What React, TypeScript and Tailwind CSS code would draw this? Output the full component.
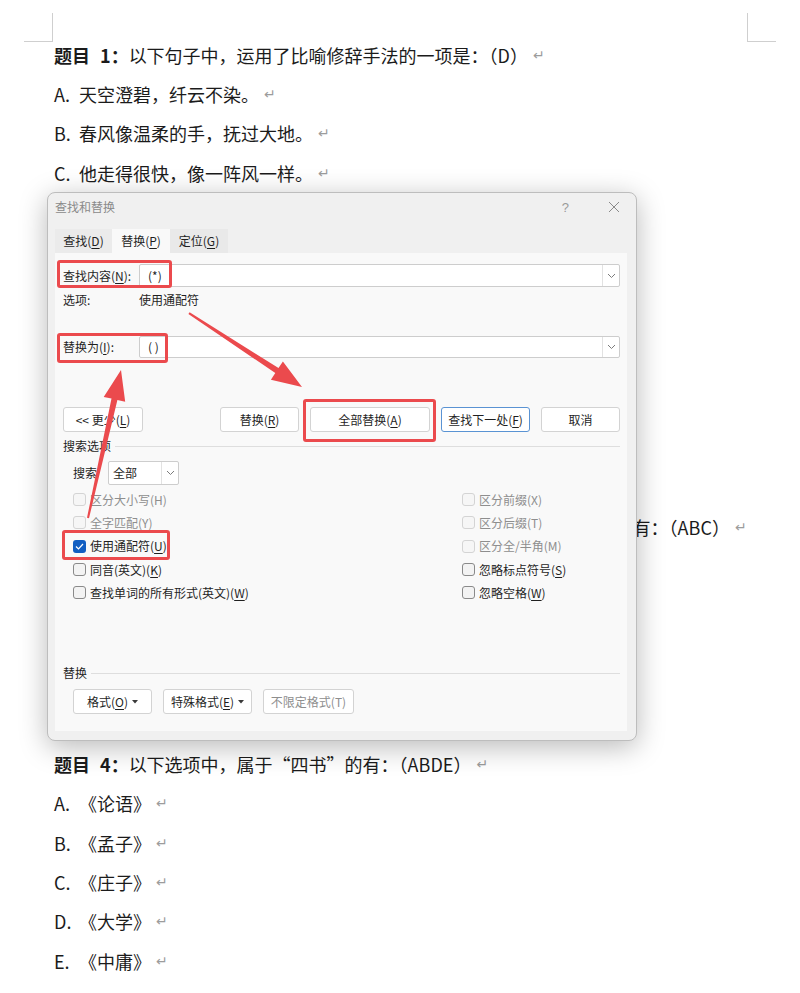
import type { ReactNode } from 'react';

const docFont = "font-['Noto_Sans_CJK_SC','Noto_Sans',sans-serif]";

function Mark() {
  return <span className="ml-[5px] text-[14px] text-[#9c9c9c] font-['DejaVu_Sans',sans-serif]">↵</span>;
}

function Line({ children }: { children?: ReactNode }) {
  return (
    <div className="h-[39.4px] flex items-center whitespace-nowrap text-[18px] leading-none text-[#1b1b1b]">
      {children}
      <Mark />
    </div>
  );
}

function Question({ n, text }: { n: number; text: string }) {
  return (
    <Line>
      <span className="font-bold">题目</span>
      <span className="font-bold ml-[10px]">{n}：</span>
      <span>{text}</span>
    </Line>
  );
}

function Option({ k, text }: { k: string; text: string }) {
  return (
    <Line>
      <span className="w-[25px]">{k}.</span>
      <span>{text}</span>
    </Line>
  );
}

function U({ children }: { children: ReactNode }) {
  return <span className="underline underline-offset-[2px] decoration-[1px]">{children}</span>;
}

function Chevron() {
  return (
    <svg width="9" height="6" viewBox="0 0 9 6" fill="none" stroke="#7c7c7c" strokeWidth="1">
      <polyline points="1 1 4.5 4.5 8 1" />
    </svg>
  );
}

function Caret() {
  return (
    <svg className="ml-[4px]" width="6" height="4" viewBox="0 0 6 4" fill="#3a3a3a">
      <polygon points="0,0 6,0 3,3.5" />
    </svg>
  );
}

function Combo({ value }: { value: string }) {
  return (
    <div className="flex-1 h-full flex items-center bg-white border border-[#cdcdcd] rounded-[2px]">
      <span className="flex-1 pl-[8px]">{value}</span>
      <div className="w-[17px] h-full border-l border-[#e2e2e2] flex items-center justify-center">
        <Chevron />
      </div>
    </div>
  );
}

function Btn({ children, w, blue, disabled }: { children: ReactNode; w: string; blue?: boolean; disabled?: boolean }) {
  return (
    <div
      className={`${w} h-[25px] flex items-center justify-center bg-white rounded-[3px] ${
        blue ? 'border-[1.5px] border-[#5a93d3]' : 'border border-[#d3d3d3]'
      } ${disabled ? 'text-[#8e8e8e]' : ''}`}
    >
      {children}
    </div>
  );
}

function Check({ label, checked, disabled }: { label: ReactNode; checked?: boolean; disabled?: boolean }) {
  return (
    <div className={`h-[23.3px] flex items-center gap-[4px] ${disabled ? 'text-[#8e8e8e]' : ''}`}>
      {checked ? (
        <div className="w-[13px] h-[13px] rounded-[3px] bg-[#115ec2] flex items-center justify-center">
          <svg width="9" height="7" viewBox="0 0 9 7" fill="none" stroke="white" strokeWidth="1.2">
            <polyline points="1 3.5 3.5 6 8 1" />
          </svg>
        </div>
      ) : (
        <div
          className={`w-[13px] h-[13px] rounded-[3px] border ${
            disabled ? 'border-[#d4d4d4] bg-[#f6f6f6]' : 'border-[#8a8a8a] bg-[#f3f3f3]'
          }`}
        />
      )}
      <span>{label}</span>
    </div>
  );
}

function Dialog() {
  return (
    <div className="absolute left-[47px] top-[192px] w-[590px] h-[549px] rounded-[8px] border border-[#bdbdbd] bg-[#f0f0f0] shadow-[0_6px_28px_rgba(0,0,0,0.28)] flex flex-col text-[12px] leading-none text-[#1f1f1f]">
      <div className="h-[28px] flex items-center pl-[7px] pr-[16px] text-[#8a8a8a]">
        <span>查找和替换</span>
        <span className="ml-auto mr-[39px] text-[13px] text-[#9a9a9a] font-['Liberation_Sans',sans-serif]">?</span>
        <svg width="12" height="12" viewBox="0 0 12 12" stroke="#8a8a8a" strokeWidth="1">
          <line x1="1" y1="1" x2="11" y2="11" />
          <line x1="11" y1="1" x2="1" y2="11" />
        </svg>
      </div>

      <div className="mt-[8px] h-[24px] ml-[7px] flex">
        <div className="w-[57px] flex items-center justify-center bg-[#ebebeb]">
          查找(<U>D</U>)
        </div>
        <div className="w-[58px] flex items-center justify-center bg-[#f9f9f9]">
          替换(<U>P</U>)
        </div>
        <div className="w-[58px] flex items-center justify-center bg-[#e9e9e9]">
          定位(<U>G</U>)
        </div>
      </div>

      <div className="flex-1 ml-[7px] mr-[9px] mb-[9px] bg-[#f9f9f9] pl-[8px] pr-[7px] pt-[11px] flex flex-col">
        <div className="h-[23px] flex items-center">
          <span className="w-[76px]">
            查找内容(<U>N</U>):
          </span>
          <Combo value="(*)" />
        </div>
        <div className="mt-[5px] h-[16px] flex items-center">
          <span className="w-[76px]">选项:</span>
          <span>使用通配符</span>
        </div>
        <div className="mt-[28px] h-[22px] flex items-center">
          <span className="w-[76px]">
            替换为(<U>I</U>):
          </span>
          <Combo value="( )" />
        </div>

        <div className="mt-[49px] flex items-center">
          <Btn w="w-[80px]">
            &lt;&lt; 更少(<U>L</U>)
          </Btn>
          <div className="ml-auto flex gap-[11px]">
            <Btn w="w-[79px]">
              替换(<U>R</U>)
            </Btn>
            <Btn w="w-[120px]">
              全部替换(<U>A</U>)
            </Btn>
            <Btn w="w-[89px]" blue>
              查找下一处(<U>F</U>)
            </Btn>
            <Btn w="w-[79px]">取消</Btn>
          </div>
        </div>

        <div className="mt-[7px] h-[14px] flex items-center">
          <span>搜索选项</span>
          <div className="flex-1 ml-[4px] h-px bg-[#dedede]" />
        </div>

        <div className="mt-[8px] h-[24px] pl-[10px] flex items-center">
          <span className="w-[35px]">搜索</span>
          <div className="w-[71px] h-full flex items-center bg-white border border-[#cdcdcd] rounded-[2px]">
            <span className="flex-1 pl-[4px]">全部</span>
            <div className="w-[17px] h-full border-l border-[#e2e2e2] flex items-center justify-center">
              <Chevron />
            </div>
          </div>
        </div>

        <div className="mt-[3px] pl-[10px] grid grid-cols-[389px_1fr]">
          <Check label="区分大小写(H)" disabled />
          <Check label="区分前缀(X)" disabled />
          <Check label="全字匹配(Y)" disabled />
          <Check label="区分后缀(T)" disabled />
          <Check label={<>使用通配符(<U>U</U>)</>} checked />
          <Check label="区分全/半角(M)" disabled />
          <Check label={<>同音(英文)(<U>K</U>)</>} />
          <Check label={<>忽略标点符号(<U>S</U>)</>} />
          <Check label={<>查找单词的所有形式(英文)(<U>W</U>)</>} />
          <Check label={<>忽略空格(<U>W</U>)</>} />
        </div>

        <div className="mt-[62px] h-[14px] flex items-center">
          <span>替换</span>
          <div className="flex-1 ml-[4px] h-px bg-[#dedede]" />
        </div>

        <div className="mt-[9px] pl-[10px] flex gap-[11px]">
          <Btn w="w-[79px]">
            格式(<U>O</U>)
            <Caret />
          </Btn>
          <Btn w="w-[89px]">
            特殊格式(<U>E</U>)
            <Caret />
          </Btn>
          <Btn w="w-[91px]" disabled>
            不限定格式(T)
          </Btn>
        </div>
      </div>
    </div>
  );
}

function Annotations() {
  const red = '#eb4a4d';
  return (
    <>
      <div className="absolute left-[57px] top-[260px] w-[115px] h-[28px] border-[3px] border-[#eb4a4d] rounded-[3px]" />
      <div className="absolute left-[57px] top-[333px] w-[111px] h-[30px] border-[3px] border-[#eb4a4d] rounded-[3px]" />
      <div className="absolute left-[303px] top-[399px] w-[133px] h-[43px] border-[3px] border-[#eb4a4d] rounded-[3px]" />
      <div className="absolute left-[62px] top-[530px] w-[108px] h-[30px] border-[3px] border-[#eb4a4d] rounded-[3px]" />
      <svg className="absolute left-0 top-0 pointer-events-none" width="800" height="993" viewBox="0 0 800 993">
        <polygon
          fill={red}
          points="188.4,313.9 275.3,373.1 270.9,379.8 302,387 282.9,361.4 278.5,368.1 189.6,312.2"
        />
        <polygon
          fill={red}
          points="89,518.2 117.4,399.9 125.2,401.7 121,370 103.7,396.9 111.5,398.6 87,517.8"
        />
      </svg>
    </>
  );
}

export default function App() {
  return (
    <div className={`relative w-[800px] h-[993px] overflow-hidden bg-white ${docFont}`}>
      <div className="pt-[13px] flex justify-between px-[24px]">
        <div className="w-[29px] h-[29px] border-r border-b border-[#cfcfcf]" />
        <div className="w-[29px] h-[29px] border-l border-b border-[#cfcfcf]" />
      </div>

      <div className="-mt-[7px] pl-[54px]">
        <Question n={1} text="以下句子中，运用了比喻修辞手法的一项是：（D）" />
        <Option k="A" text="天空澄碧，纤云不染。" />
        <Option k="B" text="春风像温柔的手，抚过大地。" />
        <Option k="C" text="他走得很快，像一阵风一样。" />
        <Option k="D" text="弯弯的月亮像一只小船。" />
        <Question n={2} text="下列词语中，书写全部正确的一项是：（B）" />
        <Option k="A" text="迫不急待" />
        <Option k="B" text="再接再厉" />
        <Option k="C" text="一愁莫展" />
        <Option k="D" text="声名狼籍" />
        <Line />
        <Line />
        <Question n={3} text="以下诗句中，运用了对偶修辞手法且描写了春天美好景色的诗句有：（ABC）" />
        <Option k="A" text="两个黄鹂鸣翠柳，一行白鹭上青天。" />
        <Option k="B" text="迟日江山丽，春风花草香。" />
        <Option k="C" text="泥融飞燕子，沙暖睡鸳鸯。" />
        <Option k="D" text="春眠不觉晓，处处闻啼鸟。" />
        <Option k="E" text="野火烧不尽，春风吹又生。" />
        <Question n={4} text="以下选项中，属于“四书”的有：（ABDE）" />
        <Option k="A" text="《论语》" />
        <Option k="B" text="《孟子》" />
        <Option k="C" text="《庄子》" />
        <Option k="D" text="《大学》" />
        <Option k="E" text="《中庸》" />
      </div>

      <Dialog />
      <Annotations />
    </div>
  );
}
